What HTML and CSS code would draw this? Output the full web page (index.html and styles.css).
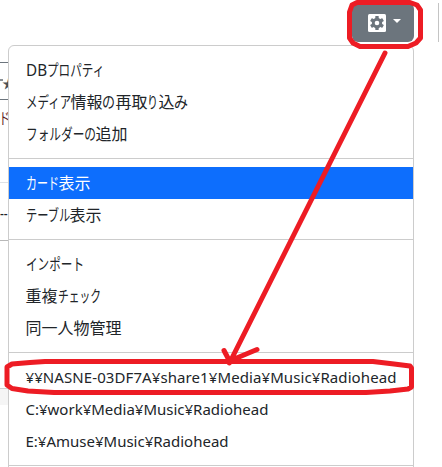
FILE: index.html
```
<!DOCTYPE html>
<html lang="ja">
<head>
<meta charset="utf-8">
<title>メディア</title>
<link rel="stylesheet" href="styles.css">
</head>
<body>
<div class="backdrop">
  <i class="rule dark r1"></i><i class="rule star-tip"></i><span class="star">★</span><i class="rule dark r2"></i>
  <span class="edge-kana">ド</span><i class="rule blue r3"></i><span class="dashes">--</span>
  <i class="rule gray r4"></i><i class="stripe"></i><i class="next-button"></i>
</div>
<header class="toolbar">
  <button class="settings" aria-label="設定">
    <svg width="18" height="18" viewBox="0 0 18 18"><rect width="18" height="18" rx="1.5" fill="#fff"/><g fill="#6c757d"><circle cx="9" cy="9" r="5.2"/><rect x="7.3" y="2" width="3.4" height="14" rx=".5"/><rect x="7.3" y="2" width="3.4" height="14" rx=".5" transform="rotate(60 9 9)"/><rect x="7.3" y="2" width="3.4" height="14" rx=".5" transform="rotate(120 9 9)"/></g><circle cx="9" cy="9" r="2.3" fill="#fff"/></svg>
    <i class="caret"></i>
  </button>
</header>
<nav class="menu">
  <a class="item"><span class="run" style="--n:1.31;--w:20">DB</span><span class="run" style="--n:5;--w:58">プロパティ</span></a>
  <a class="item"><span class="run" style="--n:4;--w:46">メディア</span>情報<span class="run" style="--n:1;--w:13">の</span>再取<span class="run" style="--n:1;--w:11">り</span>込<span class="run" style="--n:1;--w:14">み</span></a>
  <a class="item"><span class="run" style="--n:6;--w:70">フォルダーの</span>追加</a>
  <hr>
  <a class="item active"><span class="run" style="--n:3;--w:33">カード</span>表示</a>
  <a class="item"><span class="run" style="--n:4;--w:45">テーブル</span>表示</a>
  <hr>
  <a class="item"><span class="run" style="--n:5;--w:58">インポート</span></a>
  <a class="item">重複<span class="run" style="--n:4;--w:43">チェック</span></a>
  <a class="item">同一人物管理</a>
  <hr>
  <a class="item path wide">¥¥NASNE-03DF7A¥share1¥Media¥Music¥Radiohead</a>
  <a class="item path">C:¥work¥Media¥Music¥Radiohead</a>
  <a class="item path">E:¥Amuse¥Music¥Radiohead</a>
  <hr>
</nav>
<svg class="marks" width="442" height="467" viewBox="0 0 442 467">
  <path d="M357 2.500H410L417 5L420.500 10V38L416 43L408 46.500H360L353 43L349.500 38V12L352 5Z"/>
  <path d="M385 53L229.500 363M224 350.500L229.500 361L257 349.500"/>
  <path d="M45 361.500H373L394 364L410 366L411.500 368V387L408 389L390 391L366 392.500H54L28 391L12 388.500L7 385V367L12 364L30 362.500Z"/>
</svg>
</body>
</html>
```
FILE: styles.css
```
* { box-sizing: border-box; }
body {
  margin: 0; width: 442px; height: 467px; overflow: hidden; position: relative;
  background: #fff; color: #212529;
  font: 16px/24px "Noto Sans", "Noto Sans CJK JP", sans-serif;
}
.backdrop > * { position: absolute; }
.rule { left: 0; width: 8px; height: 1px; }
.dark { background: #6c757d; }
.blue { background: #dee2e6; }
.gray { background: #b8b8b8; }
.r1 { top: 62px; }
.r2 { top: 99px; }
.r3 { top: 182px; }
.r4 { top: 240px; }
.star-tip { top: 79px; width: 3px; height: 2px; background: #8a9096; }
.star { left: 2px; top: 71px; font-size: 13px; color: #495057; }
.edge-kana { left: -1px; top: 106px; color: #5b2020; transform: scaleX(.7); transform-origin: left; }
.dashes { left: 0; top: 201px; transform: scaleX(.75); transform-origin: left; }
.stripe { left: 0; top: 388px; width: 8px; height: 17px; background: #f5f5f5; border-top: 1px solid #d0d0d0; }
.next-button { left: 438px; top: 3px; width: 1px; height: 39px; background: #c4c4c4; }
.toolbar { display: flex; height: 45px; padding: 3px 0 0 352px; }
.settings {
  display: flex; align-items: center; gap: 7px;
  width: 62px; height: 39px; padding: 0 0 0 16px;
  border: 0; border-radius: 6px; background: #6c757d;
}
.caret { margin-top: -4px; border: 4px solid transparent; border-top-color: #fff; border-bottom: 0; }
.menu {
  width: 406px; height: 440px; margin-left: 8px; padding-top: 8px;
  border: 1px solid #ccc; border-radius: 6px; background: #fff; position: relative;
}
.item { display: block; height: 32px; padding: 4px 16.5px; white-space: nowrap; }
.active { background: #0d6efd; color: #fff; }
.run {
  display: inline-block; transform-origin: left;
  transform: scaleX(calc(var(--w) / (var(--n) * 16)));
  margin-right: calc((var(--w) - var(--n) * 16) * 1px);
}
.path { font-size: 15px; }
.wide { letter-spacing: .09px; }
hr { height: 1px; margin: 8px 0; border: 0; background: #ccc; }
.marks { position: absolute; inset: 0; fill: none; stroke: #ed1c24; stroke-width: 5; stroke-linecap: round; stroke-linejoin: round; }
```
